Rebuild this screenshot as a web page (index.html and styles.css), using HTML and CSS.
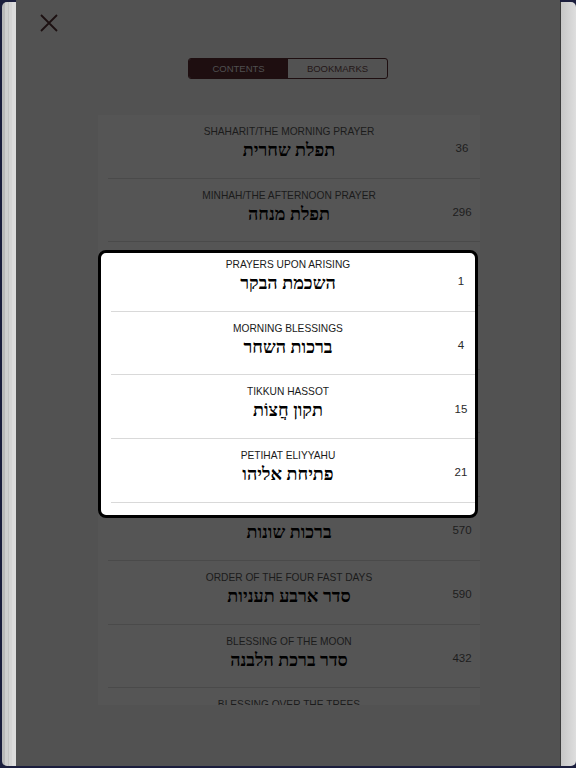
FILE: index.html
```html
<!DOCTYPE html>
<html lang="en">
<head>
<meta charset="utf-8">
<title>Contents</title>
<link rel="stylesheet" href="styles.css">
</head>
<body>
<div class="screen">
  <div class="edge edge-left"></div>
  <main class="page">
    <button class="close" aria-label="Close">
      <svg viewBox="0 0 18 18" width="18" height="18"><path d="M1 1 L17 17 M17 1 L1 17" stroke="#1c1011" stroke-width="1.8" fill="none"/></svg>
    </button>
    <div class="segmented">
      <div class="seg seg-on">CONTENTS</div>
      <div class="seg">BOOKMARKS</div>
    </div>
    <div class="toc">
      <div class="row"><div class="txt"><div class="en">SHAHARIT/THE MORNING PRAYER</div><div class="he" dir="rtl">תפלת שחרית</div></div><div class="num">36</div></div>
      <div class="row"><div class="txt"><div class="en">MINHAH/THE AFTERNOON PRAYER</div><div class="he" dir="rtl">תפלת מנחה</div></div><div class="num">296</div></div>
      <div class="row"><div class="txt"><div class="en">ARVIT/THE EVENING PRAYER</div><div class="he" dir="rtl">תפלת ערבית</div></div><div class="num">380</div></div>
      <div class="row"><div class="txt"><div class="en">KERIAT SHEMA AL HAMITA</div><div class="he" dir="rtl">קריאת שמע על המטה</div></div><div class="num">420</div></div>
      <div class="row"><div class="txt"><div class="en">BIRKAT HAMAZON</div><div class="he" dir="rtl">ברכת המזון</div></div><div class="num">500</div></div>
      <div class="row"><div class="txt"><div class="en">BERAKHA AHARONA</div><div class="he" dir="rtl">ברכה אחרונה</div></div><div class="num">540</div></div>
      <div class="row"><div class="txt"><div class="en">VARIOUS BLESSINGS</div><div class="he" dir="rtl">ברכות שונות</div></div><div class="num">570</div></div>
      <div class="row"><div class="txt"><div class="en">ORDER OF THE FOUR FAST DAYS</div><div class="he" dir="rtl">סדר ארבע תעניות</div></div><div class="num">590</div></div>
      <div class="row"><div class="txt"><div class="en">BLESSING OF THE MOON</div><div class="he" dir="rtl">סדר ברכת הלבנה</div></div><div class="num">432</div></div>
      <div class="row"><div class="txt"><div class="en">BLESSING OVER THE TREES</div><div class="he" dir="rtl">ברכת האילנות</div></div><div class="num">440</div></div>
    </div>
    <div class="popup">
      <div class="plist">
        <div class="prow"><div class="txt"><div class="en">PRAYERS UPON ARISING</div><div class="he" dir="rtl">השכמת הבקר</div></div><div class="num">1</div></div>
        <div class="prow"><div class="txt"><div class="en">MORNING BLESSINGS</div><div class="he" dir="rtl">ברכות השחר</div></div><div class="num">4</div></div>
        <div class="prow"><div class="txt"><div class="en">TIKKUN HASSOT</div><div class="he" dir="rtl">תקון חֲצוֹת</div></div><div class="num">15</div></div>
        <div class="prow"><div class="txt"><div class="en">PETIHAT ELIYYAHU</div><div class="he" dir="rtl">פתיחת אליהו</div></div><div class="num">21</div></div>
        <div class="prow"><div class="txt"><div class="en">HAREINI MEKABEL</div><div class="he" dir="rtl">הריני מקבל</div></div><div class="num">24</div></div>
      </div>
    </div>
  </main>
  <div class="edge edge-right"></div>
</div>
</body>
</html>
```
FILE: styles.css
```css
* { box-sizing: border-box; }
html, body { margin: 0; padding: 0; }
body {
  background: #1b1e3d;
  font-family: "Liberation Sans", Arial, sans-serif;
  width: 576px;
  height: 768px;
  overflow: hidden;
}
.screen {
  display: flex;
  height: 766px;
}
.edge { width: 16px; flex: none; }
.edge-left {
  margin: 2px 0 0 2px;
  width: 14px;
  border-radius: 5px 0 0 5px;
  background: linear-gradient(to right, #b9b9b9 0 3px, #cfcfcf 3px 6px, #c3c3c3 6px 7px, #d4d4d4 7px 10px, #dcdcdc 10px 14px);
}
.edge-right {
  margin-top: 2px;
  border-left: 1px solid #3a3a3a;
  border-radius: 0 5px 5px 0;
  background: linear-gradient(to right, #c6c6c6, #d2d2d2 50%, #dedede);
}
.page {
  position: relative;
  width: 544px;
  flex: none;
  background: #525252;
  display: flex;
  flex-direction: column;
  padding-top: 14px;
}
.close {
  width: 18px;
  height: 18px;
  margin-left: 24px;
  padding: 0;
  border: 0;
  background: none;
  display: block;
}
.close svg { display: block; }
.segmented {
  margin: 26px 0 0 172px;
  width: 200px;
  height: 21px;
  border: 1px solid #1e0e10;
  border-radius: 3px;
  display: flex;
  overflow: hidden;
}
.seg {
  flex: 1;
  display: flex;
  align-items: center;
  justify-content: center;
  font-size: 9.5px;
  color: #231617;
}
.seg-on { background: #1e0e10; color: #505050; }
.toc {
  margin: 36px 0 0 82px;
  width: 382px;
  height: 590px;
  overflow: hidden;
  background: #555555;
}
.row, .prow {
  display: grid;
  grid-template-columns: 36px 1fr 36px;
  height: 63.7px;
  position: relative;
}
.row::after, .prow::after {
  content: "";
  position: absolute;
  left: 10px;
  right: 0;
  bottom: 0;
  height: 1px;
  background: #4a4a4a;
}
.prow { grid-template-columns: 28px 1fr 28px; }
.prow::after { background: #d9d9d9; }
.txt {
  grid-column: 2;
  text-align: center;
  padding-top: 10px;
}
.en {
  font-size: 10.2px;
  line-height: 14px;
  color: #1b1b1b;
  white-space: nowrap;
}
.he {
  margin-top: 1px;
  font-family: "Liberation Serif", "Times New Roman", serif;
  font-size: 18px;
  line-height: 20px;
  font-weight: bold;
  color: #000;
  white-space: nowrap;
}
.num {
  grid-column: 3;
  align-self: center;
  text-align: center;
  padding-top: 3px;
  font-size: 11.5px;
  line-height: 14px;
  color: #1d1d1d;
}
.popup {
  position: absolute;
  left: 82px;
  top: 250px;
  width: 380px;
  height: 268px;
  border: 3px solid #000;
  border-radius: 8px;
  background: #fff;
  overflow: hidden;
}
.plist { margin-top: -5px; }
.prow .en { color: #1a1a1a; }
.prow .num { color: #2a2a2a; }
```
